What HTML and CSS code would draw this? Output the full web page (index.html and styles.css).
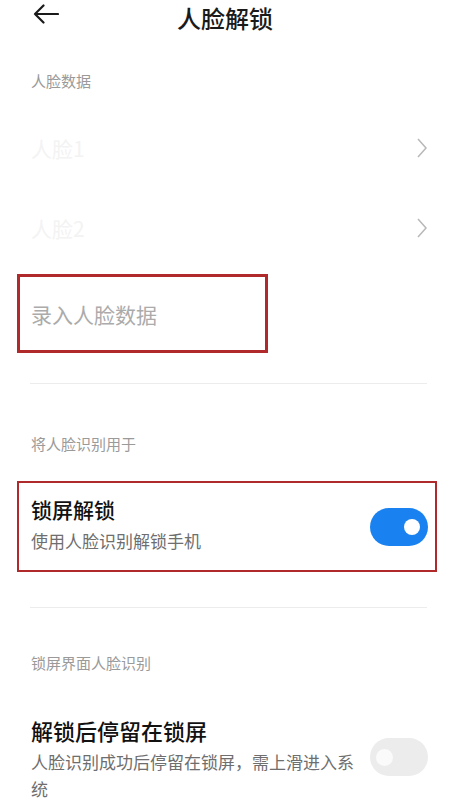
FILE: index.html
```html
<!DOCTYPE html>
<html lang="zh-CN">
<head>
<meta charset="utf-8">
<title>人脸解锁</title>
<link rel="stylesheet" href="styles.css">
</head>
<body>
<div class="page">
  <header class="header">
    <svg class="back" width="26" height="20" viewBox="0 0 26 20" aria-hidden="true">
      <path d="M25 10H2M10.5 1.5L2 10l8.5 8.5" fill="none" stroke="#1a1a1a" stroke-width="2.2" stroke-linecap="round" stroke-linejoin="round"/>
    </svg>
    <h1 class="title">人脸解锁</h1>
  </header>

  <div class="section-title st-1">人脸数据</div>

  <div class="row">
    <span class="row-label faded">人脸1</span>
    <svg class="chev" width="10" height="20" viewBox="0 0 10 20" aria-hidden="true"><path d="M1 1l8 9-8 9" fill="none" stroke="#b8b8b8" stroke-width="1.5"/></svg>
  </div>
  <div class="row">
    <span class="row-label faded">人脸2</span>
    <svg class="chev" width="10" height="20" viewBox="0 0 10 20" aria-hidden="true"><path d="M1 1l8 9-8 9" fill="none" stroke="#b8b8b8" stroke-width="1.5"/></svg>
  </div>

  <div class="box box-enroll">
    <span class="enroll">录入人脸数据</span>
  </div>

  <div class="divider d-1"></div>

  <div class="section-title st-2">将人脸识别用于</div>

  <div class="box box-lock">
    <div class="item-text">
      <div class="item-title">锁屏解锁</div>
      <div class="item-desc">使用人脸识别解锁手机</div>
    </div>
    <span class="toggle on"><span class="knob"></span></span>
  </div>

  <div class="divider d-2"></div>

  <div class="section-title st-3">锁屏界面人脸识别</div>

  <div class="item">
    <div class="item-text">
      <div class="item-title">解锁后停留在锁屏</div>
      <div class="item-desc wrap">人脸识别成功后停留在锁屏，需上滑进入系统</div>
    </div>
    <span class="toggle off"><span class="knob"></span></span>
  </div>
</div>
</body>
</html>
```

FILE: styles.css
```css
* { box-sizing: border-box; }
html, body {
  margin: 0;
  padding: 0;
  background: #ffffff;
}
body {
  font-family: "Noto Sans CJK SC", "Noto Sans", sans-serif;
  color: #1a1a1a;
  width: 450px;
  height: 800px;
  overflow: hidden;
}
.page {
  display: flex;
  flex-direction: column;
}
.header {
  height: 35px;
  display: flex;
  align-items: center;
}
.back {
  align-self: flex-start;
  margin-left: 33px;
  margin-top: 4px;
}
.title {
  margin: 0 0 0 118px;
  font-size: 24px;
  font-weight: 500;
  line-height: 35px;
  color: #1a1a1a;
}
.section-title {
  height: 40px;
  display: flex;
  align-items: center;
  padding-left: 31px;
  font-size: 15px;
  color: #9a9a9a;
}
.st-1 { margin-top: 25px; margin-bottom: 8px; }
.st-2 { margin-top: 39px; }
.st-3 { margin-top: 34px; }
.row {
  height: 80px;
  display: flex;
  align-items: center;
  justify-content: space-between;
  padding: 0 23px 0 31px;
}
.row-label {
  font-size: 21px;
}
.faded { color: #f3f3f3; }
.chev { display: block; }
.box {
  border: 3px solid #b02a2c;
  margin-left: 17px;
}
.box-enroll {
  margin-top: 6px;
  width: 251px;
  height: 79px;
  display: flex;
  align-items: center;
  padding-left: 11px;
}
.enroll {
  font-size: 21px;
  color: #ababab;
}
.divider {
  height: 1px;
  background: #ececec;
  margin: 0 23px 0 30px;
}
.d-1 { margin-top: 30px; }
.d-2 { margin-top: 35px; }
.box-lock {
  border-width: 2px;
  margin-top: 18px;
  width: 420px;
  height: 91px;
  display: flex;
  align-items: center;
  justify-content: space-between;
  padding: 0 7px 0 12px;
}
.item-text {
  display: flex;
  flex-direction: column;
}
.item-title {
  font-size: 21px;
  font-weight: 500;
  line-height: 28px;
  color: #111;
}
.item-desc {
  font-size: 17px;
  line-height: 26px;
  color: #6e6e6e;
  margin-top: 6px;
}
.box-lock .item-title { margin-top: -5px; }
.box-lock .item-desc { margin-top: 5px; }
.item {
  margin-top: 33px;
  display: flex;
  align-items: flex-start;
  justify-content: space-between;
  padding: 0 22px 0 31px;
}
.item .item-title { font-size: 22px; line-height: 30px; }
.item .item-desc { margin-top: 3px; line-height: 27px; }
.wrap { width: 330px; }
.toggle {
  width: 58px;
  height: 38px;
  border-radius: 19px;
  display: flex;
  align-items: center;
  flex-shrink: 0;
}
.toggle.on {
  background: #1a82f0;
  justify-content: flex-end;
  padding-right: 8px;
}
.toggle.off {
  background: #ececec;
  justify-content: flex-start;
  padding-left: 6px;
  margin-top: 23px;
}
.knob {
  width: 16px;
  height: 16px;
  border-radius: 50%;
  background: #ffffff;
}
.toggle.off .knob {
  width: 17px;
  height: 17px;
  background: #fafafa;
}
```
